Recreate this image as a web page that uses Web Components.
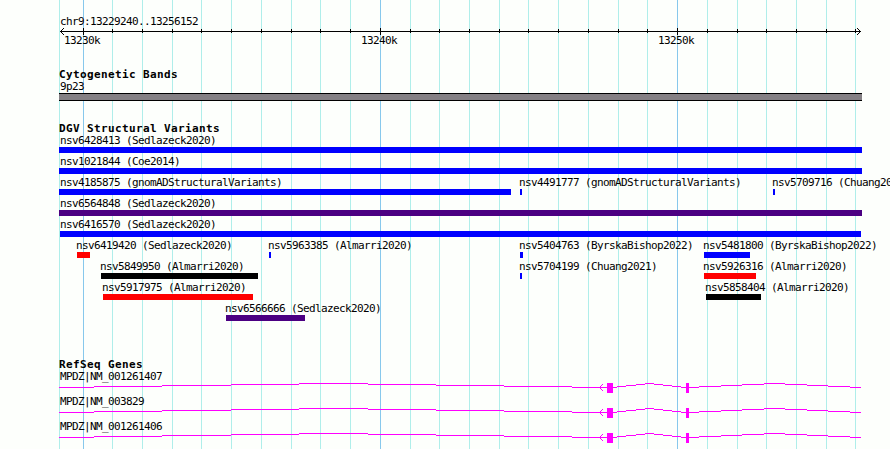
<!DOCTYPE html>
<html lang="en">
<head>
<meta charset="utf-8">
<title>chr9:13229240..13256152</title>
<style>
body {
  margin: 0;
  background: #fdfffc;
  overflow: hidden;
}
</style>
</head>
<body>
<genome-browser>
  <genome-ruler region="chr9:13229240..13256152"></genome-ruler>
  <genome-track class="bands" name="Cytogenetic Bands">
    <cyto-band name="9p23"></cyto-band>
  </genome-track>
  <genome-track class="variants" name="DGV Structural Variants" style="--gap: 2px">
    <feature-row>
      <sv-feature start="59" end="862">nsv6428413 (Sedlazeck2020)</sv-feature>
    </feature-row>
    <feature-row>
      <sv-feature start="59" end="862">nsv1021844 (Coe2014)</sv-feature>
    </feature-row>
    <feature-row>
      <sv-feature start="59" end="511">nsv4185875 (gnomADStructuralVariants)</sv-feature>
      <sv-feature start="520" end="522">nsv4491777 (gnomADStructuralVariants)</sv-feature>
      <sv-feature start="773" end="775">nsv5709716 (Chuang2021)</sv-feature>
    </feature-row>
    <feature-row>
      <sv-feature start="59" end="862" color="#4b0082">nsv6564848 (Sedlazeck2020)</sv-feature>
    </feature-row>
    <feature-row>
      <sv-feature start="60" end="861">nsv6416570 (Sedlazeck2020)</sv-feature>
    </feature-row>
    <feature-row>
      <sv-feature start="77" end="90" color="#ff0000">nsv6419420 (Sedlazeck2020)</sv-feature>
      <sv-feature start="269" end="271">nsv5963385 (Almarri2020)</sv-feature>
      <sv-feature start="520" end="523">nsv5404763 (ByrskaBishop2022)</sv-feature>
      <sv-feature start="704" end="750">nsv5481800 (ByrskaBishop2022)</sv-feature>
    </feature-row>
    <feature-row>
      <sv-feature start="101" end="258" color="#000000">nsv5849950 (Almarri2020)</sv-feature>
      <sv-feature start="520" end="522">nsv5704199 (Chuang2021)</sv-feature>
      <sv-feature start="704" end="756" color="#ff0000">nsv5926316 (Almarri2020)</sv-feature>
    </feature-row>
    <feature-row>
      <sv-feature start="103" end="253" color="#ff0000">nsv5917975 (Almarri2020)</sv-feature>
      <sv-feature start="706" end="761" color="#000000">nsv5858404 (Almarri2020)</sv-feature>
    </feature-row>
    <feature-row>
      <sv-feature start="226" end="305" color="#4b0082">nsv6566666 (Sedlazeck2020)</sv-feature>
    </feature-row>
  </genome-track>
  <genome-track class="genes" name="RefSeq Genes">
    <gene-transcript name="MPDZ|NM_001261407"></gene-transcript>
    <gene-transcript name="MPDZ|NM_003829"></gene-transcript>
    <gene-transcript name="MPDZ|NM_001261406"></gene-transcript>
  </genome-track>
</genome-browser>

<script>
const WIDTH = 890;
const HEIGHT = 449;
const LEFT = 59;
const RIGHT = 862;

// x of 13230k and pixels per kilobase
const FIRST_TICK = 83.05;
const PX_PER_KB = 29.727;

/**
 * Positions of the kilobase ticks; every tenth one is a major tick
 * @returns {Array<{x: number, kb: number, major: boolean}>}
 */
function getTicks() {
  const ticks = [];
  for (let i = 0; i <= 26; i++) {
    ticks.push({ x: Math.floor(FIRST_TICK + i * PX_PER_KB), kb: 13230 + i, major: i % 10 === 0 });
  }
  return ticks;
}

/**
 * GenomeBrowserElement - panel with the vertical grid behind the slotted tracks
 */
class GenomeBrowserElement extends HTMLElement {
  constructor() {
    super();
    this.attachShadow({ mode: 'open' });
  }

  connectedCallback() {
    const lines = getTicks()
      .map(t => `<rect x="${t.x}" width="1" height="${HEIGHT}" fill="${t.major ? '#87c8ec' : '#afeeea'}"/>`)
      .join('');

    this.shadowRoot.innerHTML = `
      <style>
        :host {
          display: grid;
          width: ${WIDTH}px;
          height: ${HEIGHT}px;
          overflow: hidden;
          color: #000;
          font: 11px/13px "DejaVu Sans Mono", monospace;
          letter-spacing: -0.622px;
          white-space: nowrap;
        }
        svg, .tracks { grid-area: 1 / 1; }
        svg { display: block; }
        .tracks { display: flex; flex-direction: column; min-width: 0; }
        ::slotted(.bands) { margin-top: 20px; }
        ::slotted(.variants) { margin-top: 21px; }
        ::slotted(.genes) { margin-top: 37px; }
      </style>
      <svg width="${WIDTH}" height="${HEIGHT}" shape-rendering="crispEdges">
        <rect x="${LEFT}" width="1" height="${HEIGHT}" fill="#afeeea"/>${lines}
      </svg>
      <div class="tracks"><slot></slot></div>
    `;
  }
}

/**
 * GenomeRulerElement - region name, axis with arrowheads and tick labels
 */
class GenomeRulerElement extends HTMLElement {
  constructor() {
    super();
    this.attachShadow({ mode: 'open' });
  }

  connectedCallback() {
    const ticks = getTicks();
    const marks = ticks
      .map(t => t.major
        ? `<rect x="${t.x}" y="0" width="1" height="7"/>`
        : `<rect x="${t.x}" y="1" width="1" height="4"/>`)
      .join('');
    const labels = ticks
      .filter(t => t.major)
      .map(t => `<span style="margin-left: ${t.x - 19}px">${t.kb}k</span>`)
      .join('');

    this.shadowRoot.innerHTML = `
      <style>
        :host { display: block; padding-top: 15px; height: 33px; }
        .region { margin-left: 60px; }
        svg { display: block; }
        .labels { display: grid; margin-top: -1px; }
        .labels span { grid-area: 1 / 1; }
      </style>
      <div class="region">${this.getAttribute('region')}</div>
      <svg width="${WIDTH}" height="7" shape-rendering="crispEdges">
        <rect x="60" y="3" width="801" height="1"/>
        ${marks}
        <path d="M60 3h1v1h-1zM61 2h1v1h-1zM61 4h1v1h-1zM62 1h1v1h-1zM62 5h1v1h-1zM63 0h1v1h-1zM63 6h1v1h-1z"/>
        <path d="M860 3h1v1h-1zM859 2h1v1h-1zM859 4h1v1h-1zM858 1h1v1h-1zM858 5h1v1h-1zM857 0h1v1h-1zM857 6h1v1h-1z"/>
      </svg>
      <div class="labels">${labels}</div>
    `;
  }
}

/**
 * GenomeTrackElement - bold track title above its slotted rows
 */
class GenomeTrackElement extends HTMLElement {
  constructor() {
    super();
    this.attachShadow({ mode: 'open' });
  }

  connectedCallback() {
    this.shadowRoot.innerHTML = `
      <style>
        :host { display: block; }
        h2 {
          margin: 0 0 -1px ${LEFT}px;
          font-size: 11px;
          line-height: 13px;
          letter-spacing: 0.378px;
        }
        .rows { display: flex; flex-direction: column; gap: var(--gap, 0); }
      </style>
      <h2>${this.getAttribute('name')}</h2>
      <div class="rows"><slot></slot></div>
    `;
  }
}

/**
 * CytoBandElement - grey chromosome band with a black outline
 */
class CytoBandElement extends HTMLElement {
  constructor() {
    super();
    this.attachShadow({ mode: 'open' });
  }

  connectedCallback() {
    this.shadowRoot.innerHTML = `
      <style>
        :host { display: block; }
        .name { margin-left: 60px; }
        .band {
          box-sizing: border-box;
          margin-left: ${LEFT}px;
          width: ${RIGHT - LEFT}px;
          height: 8px;
          background: #848084;
          border: solid #000;
          border-width: 1px 0;
        }
      </style>
      <div class="name">${this.getAttribute('name')}</div>
      <div class="band"></div>
    `;
  }
}

/**
 * FeatureRowElement - one row of features sharing the same axis
 */
class FeatureRowElement extends HTMLElement {
  constructor() {
    super();
    this.attachShadow({ mode: 'open' });
    this.shadowRoot.innerHTML = `
      <style>
        :host { display: grid; }
        ::slotted(*) { grid-area: 1 / 1; }
      </style>
      <slot></slot>
    `;
  }
}

/**
 * SVFeatureElement - labelled bar from start to end
 */
class SVFeatureElement extends HTMLElement {
  constructor() {
    super();
    this.attachShadow({ mode: 'open' });
  }

  connectedCallback() {
    const start = Number(this.getAttribute('start'));
    const end = Number(this.getAttribute('end'));
    const color = this.getAttribute('color') || '#0000ff';
    // labels never begin left of x=60
    const indent = Math.max(60 - start, -1);

    this.shadowRoot.innerHTML = `
      <style>
        :host { display: block; margin-left: ${start}px; width: ${end - start}px; }
        .label { height: 13px; margin-left: ${indent}px; }
        .bar { height: 6px; background: ${color}; }
      </style>
      <div class="label"><slot></slot></div>
      <div class="bar"></div>
    `;
  }
}

// Intron hats as [start, end, height above the centre line]
const INTRON_STEPS = [
  [59, 94, 0], [94, 162, 1], [162, 231, 2], [231, 299, 3], [299, 368, 4],
  [368, 436, 3], [436, 504, 2], [504, 572, 1], [572, 617, 0],
  [617, 626, 1], [626, 636, 2], [636, 645, 3], [645, 654, 4],
  [654, 663, 3], [663, 672, 2], [672, 681, 1], [681, 699, 0],
  [699, 721, 1], [721, 742, 2], [742, 764, 3], [764, 785, 4],
  [785, 807, 3], [807, 828, 2], [828, 850, 1], [850, 861, 0],
];

/**
 * GeneTranscriptElement - exons joined by introns, arrow on the left strand end
 */
class GeneTranscriptElement extends HTMLElement {
  constructor() {
    super();
    this.attachShadow({ mode: 'open' });
  }

  connectedCallback() {
    const introns = INTRON_STEPS
      .map(([start, end, up]) => `<rect x="${start}" y="${4 - up}" width="${end - start}" height="1"/>`)
      .join('');

    this.shadowRoot.innerHTML = `
      <style>
        :host { display: block; height: 25px; }
        .name { margin-left: 60px; }
        svg { display: block; }
      </style>
      <div class="name">${this.getAttribute('name')}</div>
      <svg width="${WIDTH}" height="10" fill="#ff00ff" shape-rendering="crispEdges">
        ${introns}
        <path d="M600 3h1v3h-1zM601 2h1v1h-1zM601 6h1v1h-1zM602 1h1v1h-1zM602 7h1v1h-1z"/>
        <rect x="607" width="6" height="10"/>
        <rect x="686" width="3" height="10"/>
      </svg>
    `;
  }
}

customElements.define('genome-browser', GenomeBrowserElement);
customElements.define('genome-ruler', GenomeRulerElement);
customElements.define('genome-track', GenomeTrackElement);
customElements.define('cyto-band', CytoBandElement);
customElements.define('feature-row', FeatureRowElement);
customElements.define('sv-feature', SVFeatureElement);
customElements.define('gene-transcript', GeneTranscriptElement);
</script>
</body>
</html>
